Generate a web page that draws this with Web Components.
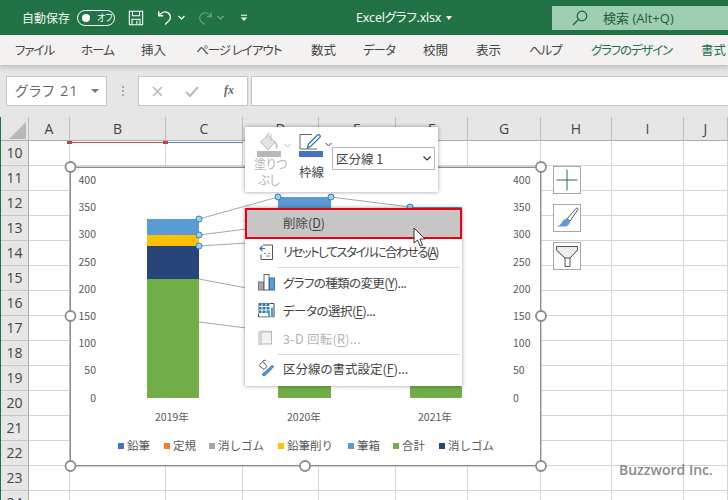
<!DOCTYPE html>
<html><head><meta charset="utf-8"><style>
html,body{margin:0;padding:0;background:#fff}
body{width:728px;height:500px;overflow:hidden;position:relative;font-family:"Noto Sans CJK JP","Open Sans",sans-serif}
</style></head><body>
<xl-app></xl-app>
<script>
const JP='"Noto Sans CJK JP","Noto Sans",sans-serif';
function def(name,css,html){
 customElements.define(name,class extends HTMLElement{
  constructor(){super();const s=this.attachShadow({mode:'open'});s.innerHTML='<style>'+css+'</style>'+(typeof html==='function'?html(this):html);}
 });
}
def('xl-titlebar',`
:host{display:flex;align-items:center;height:35px;background:#217346;color:#fff;font:12px/1 ${JP};font-feature-settings:"palt";position:relative;flex:none}
svg{display:block;flex:none}
.auto{margin-left:22px;width:49px;white-space:nowrap;opacity:.95}
.tog{margin-left:6px;width:38px;height:16px;border:1.2px solid #fff;border-radius:9px;display:flex;align-items:center;font-size:9px;gap:7px;padding-left:4px;box-sizing:border-box}
.tog i{width:8px;height:8px;background:#fff;border-radius:50%;display:block}
.title{position:absolute;left:356px;top:10px;font:12.500px/15px "Open Sans",${JP};letter-spacing:-.2px;white-space:nowrap;font-feature-settings:"palt"}
.title i{display:inline-block;width:0;height:0;border:3.500px solid transparent;border-top:4px solid #fff;border-bottom:0;margin-left:5px;vertical-align:2px}
.search{margin-left:auto;width:176px;height:24px;background:#a0ceb2;color:#1f5c3a;display:flex;align-items:center;font:13px/1 "Open Sans",${JP};font-feature-settings:"palt";align-self:flex-start;margin-top:6px}
.search svg{margin-left:20px}
.search span{margin-left:15px}
`,`<span class="auto">自動保存</span><span class="tog"><i></i><span>オフ</span></span>
<svg style="margin-left:13px" width="16" height="16" viewBox="0 0 18 18" fill="none" stroke="#fff" stroke-width="1.200"><path d="M1.500 1.500h15v15h-15z"/><path d="M5 1.500v5h8v-5M4.500 16.500v-6h9v6M10 12v4"/></svg>
<svg style="margin-left:13px" width="16" height="17" viewBox="0 0 18 18" fill="none" stroke="#fff" stroke-width="1.500"><path d="M2 2v5h5M2.500 7C5 3 9 2 12 3.500c3.500 2 4 6 1.500 9L9 17"/></svg>
<svg style="margin-left:5px" width="7" height="5" viewBox="0 0 7 5" fill="none" stroke="#fff" stroke-width="1.200"><path d="M.5 1l3 3 3-3"/></svg>
<svg style="margin-left:12px;opacity:.4" width="16" height="17" viewBox="0 0 18 18" fill="none" stroke="#cfe5d8" stroke-width="1.300"><path d="M16 3v5h-5M15.500 8C13 4 9 3 6 4.500c-3.500 2-4 6-1.500 9L9 17"/></svg>
<svg style="margin-left:4px;opacity:.4" width="7" height="5" viewBox="0 0 7 5" fill="none" stroke="#fff" stroke-width="1.200"><path d="M.5 1l3 3 3-3"/></svg>
<svg style="margin-left:16px" width="8" height="8" viewBox="0 0 8 8" fill="#fff"><path d="M1 .8h6v1H1zM.8 3.500h6.400L4 7z"/></svg>
<span class="title">Excelグラフ.xlsx<i></i></span>
<div class="search"><svg width="16" height="16" viewBox="0 0 16 16" fill="none" stroke="#1f5c3a" stroke-width="1.200"><circle cx="10" cy="6" r="4.800"/><path d="M6.500 9.500L1 15"/></svg><span>検索 (Alt+Q)</span></div>`);

def('xl-tabs',`
:host{display:flex;height:30px;background:#f3f2f1;align-items:center;font:12.500px/1 ${JP};color:#444;font-feature-settings:"palt";white-space:nowrap;flex:none;position:relative;z-index:2;overflow:hidden;box-shadow:0 2px 6px rgba(0,0,0,.2)}
span{display:block;flex:none}.g{color:#217346}.k{letter-spacing:-1px}
`,`<span class="k" style="margin-left:15px;width:37px">ファイル</span><span class="k" style="margin-left:29px;width:32px">ホーム</span><span style="margin-left:28px;width:26px">挿入</span><span class="k" style="margin-left:29px;width:86px">ページ レイアウト</span><span style="margin-left:29px;width:26px">数式</span><span class="k" style="margin-left:26px;width:32px">データ</span><span style="margin-left:28px;width:26px">校閲</span><span style="margin-left:27px;width:26px">表示</span><span class="k" style="margin-left:27px;width:32px">ヘルプ</span><span class="g k" style="margin-left:30px;width:80px;letter-spacing:-1.200px">グラフのデザイン</span><span class="g" style="margin-left:30px;width:26px">書式</span>`);

def('xl-formula',`
:host{display:flex;height:52px;background:#e6e6e6;padding:11px 0 0 6px;box-sizing:border-box;flex:none;font-family:${JP}}
.box{background:#fff;border:1px solid #c6c6c6;box-sizing:border-box;height:30px;display:flex;align-items:center}
.name{width:101px;color:#666;font:14px/1 "Open Sans",${JP};font-feature-settings:"palt";padding-left:8px;letter-spacing:1.300px}
.name b{margin-left:auto;margin-right:7px;width:0;height:0;border:4px solid transparent;border-top:4px solid #777;border-bottom:0}
.dots{width:31px;display:flex;flex-direction:column;align-items:center;justify-content:center;gap:2px;height:30px}
.dots i{width:2px;height:2px;background:#aaa;display:block}
.fx{width:110px;position:relative}
.fx svg{flex:none}
.fx em{font:italic bold 12px/1 "Liberation Serif",serif;color:#666;position:absolute;left:85px;top:7px}
.in{flex:1;margin-left:3px;border-right:0}
`,`<div class="box name"><span>グラフ 21</span><b></b></div><div class="dots"><i></i><i></i><i></i></div>
<div class="box fx"><svg style="margin-left:13px" width="11" height="11" viewBox="0 0 11 11" stroke="#b9b9b9" stroke-width="1.600"><path d="M1 1l9 9M10 1l-9 9"/></svg><svg style="margin-left:22px" width="14" height="11" viewBox="0 0 14 11" fill="none" stroke="#b9b9b9" stroke-width="2"><path d="M1 6l4 4 8-9"/></svg><em>fx</em></div><div class="box in"></div>`);

def('xl-sheet',`
:host{display:grid;grid-template-columns:28px 41px 96px 77px 76px 77px 72px 73px 71px 72px 44px;grid-template-rows:24px repeat(15,25px);flex:none;position:relative;font:14px/1 "Open Sans",sans-serif;color:#444;overflow:hidden;border-left:1px solid #217346}
.c{display:flex;align-items:center;justify-content:center;background:#e6e6e6;box-sizing:border-box}
.h{border-right:1px solid #bdbdbd;border-bottom:1px solid #ababab}
.r{border-right:1px solid #ababab;border-bottom:1px solid #c8c8c8}
.cell{border-right:1px solid #d4d4d4;border-bottom:1px solid #d4d4d4;background:#fff}
.corner{position:relative}
.corner i{position:absolute;left:8px;top:5px;width:0;height:0;border-style:solid;border-width:0 0 17px 17px;border-color:transparent transparent #b8b8b8 transparent}
.mark{position:absolute;height:1.500px;top:24.500px}
.sq{position:absolute;width:5px;height:3px;top:24px;background:#b7474a}
`,()=>{
 let h='<div class="c h corner"><i></i></div>';
 'ABCDEFGHIJ'.split('').forEach(l=>h+=`<div class="c h">${l}</div>`);
 for(let r=10;r<=24;r++){h+=`<div class="c r">${r}</div>`;for(let c=0;c<10;c++)h+='<div class="cell"></div>';}
 h+='<div class="mark" style="left:68px;width:97px;background:#c0504d"></div><div class="mark" style="left:165px;width:77px;background:#4f81bd"></div><div class="sq" style="left:66px"></div><div class="sq" style="left:162px"></div>';
 return h+'<slot></slot>';
});

const vals=[['400',180],['350',207],['300',234],['250',262],['200',289],['150',316],['100',343],['50',370],['0',398]];
def('xl-chart',`
:host{display:block;position:absolute;left:0;top:0;width:728px;height:500px;pointer-events:none;font:10.500px/1 ${JP};color:#595959}
.frame{position:absolute;left:70px;top:167px;width:471px;height:299px;background:#fff;border:1px solid #8c8c8c;box-sizing:border-box;box-shadow:0 0 0 .5px #a8a8a8}
svg{position:absolute;left:0;top:0}
.t{position:absolute;white-space:nowrap;line-height:12px;height:12px}
.l{right:632px}.rr{left:513px}
.leg{position:absolute;left:118px;top:438px;display:flex;align-items:center;height:16px;font-size:11.500px;white-space:nowrap;color:#595959}
.leg span{display:flex;align-items:center}
.leg i{width:6px;height:6px;margin-right:3px;display:block}
`,()=>{
 let h='<div class="frame"></div>';
 vals.forEach(v=>{h+=`<div class="t l" style="top:${v[1]-6}px">${v[0]}</div><div class="t rr" style="top:${v[1]-6}px">${v[0]}</div>`});
 [['2019年',155],['2020年',287],['2021年',418]].forEach(v=>h+=`<div class="t" style="top:411px;left:${v[1]}px">${v[0]}</div>`);
 const bar=(x,w,segs)=>segs.map(s=>`<rect x="${x}" y="${s[0]}" width="${w}" height="${s[1]-s[0]}" fill="${s[2]}"/>`).join('');
 const hd=(x,y)=>`<circle cx="${x}" cy="${y}" r="5" fill="#fff" stroke="#8c8c8c" stroke-width="1.800"/>`;
 const sh=(x,y)=>`<circle cx="${x}" cy="${y}" r="3" fill="#9fd0f0" stroke="#2e86c1" stroke-width="1"/>`;
 h+=`<svg width="728" height="500">
 <g stroke="#a6a6a6" stroke-width="1" fill="none"><path d="M199 219L278 197M199 235L278 225M199 246L278 241M199 279L278 294M199 322L278 332M331 197L410 207"/></g>
 ${bar(147,52,[[219,235,'#5b9bd5'],[235,246,'#ffc000'],[246,279,'#264478'],[279,398,'#70ad47']])}
 ${bar(278,53,[[197,230,'#5b9bd5'],[385,398,'#70ad47']])}
 ${bar(410,52,[[207,230,'#5b9bd5'],[385,398,'#70ad47']])}
 ${sh(199,219)}${sh(199,235)}${sh(199,246)}${sh(278,197)}${sh(331,197)}${sh(410,207)}
 ${hd(70.500,167)}${hd(541,167)}${hd(70.500,316)}${hd(541,316)}${hd(70.500,466)}${hd(305,466)}${hd(541,466)}
 </svg>`;
 h+='<div class="leg">';
 [['鉛筆','#4472c4',14],['定規','#ed7d31',13],['消しゴム','#a5a5a5',14],['鉛筆削り','#ffc000',15],['筆箱','#5b9bd5',13],['合計','#70ad47',14],['消しゴム','#264478',0]].forEach(v=>{h+=`<span style="margin-right:${v[2]}px"><i style="background:${v[1]}"></i>${v[0]}</span>`});
 return h+'</div>';
});

def('xl-side',`
:host{display:flex;flex-direction:column;gap:10px;position:absolute;left:553px;top:166px}
div{width:28px;height:28px;border:1px solid #a8a8a8;background:#fff;box-sizing:border-box;display:flex;align-items:center;justify-content:center}
`,`<div><svg width="22" height="22" viewBox="0 0 22 22" stroke="#217346" stroke-width="1"><path d="M.5 11h21M11 .5v21"/></svg></div>
<div><svg width="24" height="24" viewBox="0 0 24 24"><path d="M12 13L21 2.500c1-1 2.500 0 1.800 1.200L15 15z" fill="#fff" stroke="#555"/><path d="M11.500 12.500c2 .5 3.500 2 3.500 3.500-.5 2.500-2.500 4-4.500 4.500H1.500c2-.5 3.500-1.500 5-3.500 1-2.500 3-4 5-4.500z" fill="#5b9bd5"/></svg></div>
<div><svg width="24" height="24" viewBox="0 0 24 24" fill="#fff" stroke="#555" stroke-width="1"><path d="M1.500 2.500h21v3.500L15 14v8.500H10V14L1.500 6z"/><path d="M1.500 2.500h21v3.500L15 14H10L1.500 6z" fill="#eee"/></svg></div>`);

def('xl-mini',`
:host{display:flex;position:absolute;left:245px;top:127px;width:193px;height:65px;background:#fff;box-shadow:0 0 4px rgba(0,0,0,.4);font:12px/16px ${JP};font-feature-settings:"palt";color:#444;box-sizing:border-box}
.b{display:flex;flex-direction:column;align-items:flex-start;flex:none;padding-top:6px}
.fill{width:49px;color:#b5b5b5}
.bd{width:38px}
.bar{width:24px;height:6px}
.ic{display:flex;align-items:flex-start;height:18px}
.sel{margin:20px 0 0;width:103px;height:23px;border:1px solid #b8b8b8;box-sizing:border-box;display:flex;align-items:center;padding-left:3px;font-size:12.500px;font-family:${JP}}
.sel svg{margin-left:auto;margin-right:3px}
`,`<div class="b fill"><div class="ic" style="margin-left:14px"><svg width="20" height="18" viewBox="0 0 20 18" fill="none" stroke="#bdbdbd"><path d="M1.500 9L9 2l7 7-7 8z" fill="#e4e4e4"/><path d="M8 5V2c0-2 4-2 4 0v6"/><path d="M16 9c2 2 2.500 6 .5 6" stroke-width="1.600"/></svg><svg style="margin:10px 0 0 5px" width="7" height="5" viewBox="0 0 7 5" fill="none" stroke="#bbb"><path d="M.5 1l3 3 3-3"/></svg></div><div class="bar" style="background:#b8b8b8;margin-left:12px"></div><div style="width:30px;margin-left:9px;text-align:center;margin-top:-1px;white-space:nowrap">塗りつ<br>ぶし</div></div>
<div class="b bd"><div class="ic" style="margin-left:5px"><svg width="24" height="17" viewBox="0 0 24 17" fill="none"><path d="M1 16V1.500h12" stroke="#666"/><path d="M1 16h17" stroke="#666"/><path d="M8.500 15l1-4L18.500 2c1.500-1.200 3.500.5 2.500 2.200L12 13z" fill="#fff" stroke="#2e75b6" stroke-width="1.300"/></svg><svg style="margin:9px 0 0 2px" width="7" height="5" viewBox="0 0 7 5" fill="none" stroke="#444"><path d="M.5 1l3 3 3-3"/></svg></div><div class="bar" style="background:#4472c4;margin-left:5px"></div><div style="margin:7px 0 0 5px;font-size:12.500px">枠線</div></div>
<div class="sel"><span>区分線 1</span><svg width="8" height="5" viewBox="0 0 8 5" fill="none" stroke="#333" stroke-width="1.200"><path d="M.5 .5l3.500 3.500 3.500-3.500"/></svg></div>`);

def('xl-item',`
:host{display:flex;align-items:center;height:28px;padding-left:38px;position:relative;font:12.500px/1 ${JP};font-feature-settings:"palt";color:#444;white-space:nowrap;box-sizing:border-box}
:host([disabled]){color:#b4b4b4}
:host([active]){height:31px;background:#c8c6c4;outline:2px solid #e60012;outline-offset:-2px}
::slotted(svg){position:absolute;left:13px;top:calc(50% - 1px);transform:translateY(-50%)}
`,`<slot name="icon"></slot><slot></slot>`);

def('xl-menu',`
:host{display:block;position:absolute;left:245px;top:208px;width:216.500px;height:178px;background:#fff;box-shadow:0 0 4px rgba(0,0,0,.4)}
.sep{height:1px;background:#d8d8d8;margin:1px 2px 1px 33px}
`,`<slot name="a"></slot><slot name="b"></slot><div class="sep"></div><slot name="c"></slot><slot name="d"></slot><slot name="e"></slot><div class="sep" style="margin-bottom:0"></div><slot name="f"></slot>`);

def('xl-app',`
:host{display:flex;flex-direction:column;width:728px;height:500px;position:relative;overflow:hidden}
.wm{position:absolute;left:619px;top:461px;font:600 14px/18px "Open Sans",sans-serif;color:#8a8a8a;white-space:nowrap}
.cur{position:absolute;left:413px;top:227px}
u{text-underline-offset:2px}
xl-item u{text-underline-offset:2px}
`,`<xl-titlebar></xl-titlebar><xl-tabs></xl-tabs><xl-formula></xl-formula><xl-sheet></xl-sheet>
<xl-chart></xl-chart><xl-side></xl-side><xl-mini></xl-mini>
<xl-menu>
<xl-item slot="a" active>削除(<u>D</u>)</xl-item>
<xl-item slot="b" style="height:27px;letter-spacing:-1.650px"><svg slot="icon" width="15" height="17" viewBox="0 0 15 17" fill="none" stroke="#555"><path d="M5 1.500h9.500v14.500H3V11"/><path d="M7 5H2.500M4.500 2.500L2 5l2.500 2.500" stroke="#2e75b6" stroke-width="1.200"/><path d="M6 10h2M10 10h2M8 12.500h4" stroke="#888"/></svg>リセットしてスタイルに合わせる(<u>A</u>)</xl-item>
<xl-item slot="c" style="letter-spacing:-.6px"><svg slot="icon" width="17" height="18" viewBox="0 0 17 18"><rect x=".5" y="9" width="5" height="8" fill="#a6a6a6" stroke="#777"/><rect x="6" y="1.500" width="5" height="15.500" fill="#fff" stroke="#666"/><rect x="11.500" y="5" width="5" height="12" fill="#5b9bd5" stroke="#2e75b6"/></svg>グラフの種類の変更(<u>Y</u>)...</xl-item>
<xl-item slot="d" style="letter-spacing:-.5px"><svg slot="icon" width="17" height="15" viewBox="0 0 17 15"><path d="M.5 .5h11v10h-11z" fill="#2e75b6"/><path d="M4 1v10M8 1v10M1 4h11M1 7.500h11" stroke="#fff"/><path d="M.5 11v3.500h15.500V1H12" fill="none" stroke="#444"/><path d="M10 8h2v6h-2zM13 5h2v9h-2z" fill="#5b9bd5"/></svg>データの選択(<u>E</u>)...</xl-item>
<xl-item slot="e" disabled style="letter-spacing:.3px"><svg slot="icon" width="14" height="15" viewBox="0 0 14 15" fill="#f2f2f2" stroke="#b5b5b5"><path d="M1 1.500l2-1h10.500v13H3l-2 1z"/><path d="M3 1.500h10.500M3 1.500V13.500" fill="none"/></svg>3-D 回転(<u>R</u>)...</xl-item>
<xl-item slot="f"><svg slot="icon" width="16" height="17" viewBox="0 0 16 17" fill="none" stroke="#555"><path d="M1 6l4-4 4 5-3 3zM5 2l1-1.500 2 .5"/><path d="M4 15l7-6 3-3 1.500 1-3 3.500-6 6z" fill="#5b9bd5" stroke="#2e75b6"/></svg>区分線の書式設定(<u>F</u>)...</xl-item>
</xl-menu>
<svg class="cur" width="14" height="20" viewBox="0 0 14 20"><path d="M1 1v15l3.500-3 2.500 6 2.500-1-2.500-6H12z" fill="#fff" stroke="#333"/></svg>
<div class="wm">Buzzword Inc.</div>`);
</script>
</body></html>
